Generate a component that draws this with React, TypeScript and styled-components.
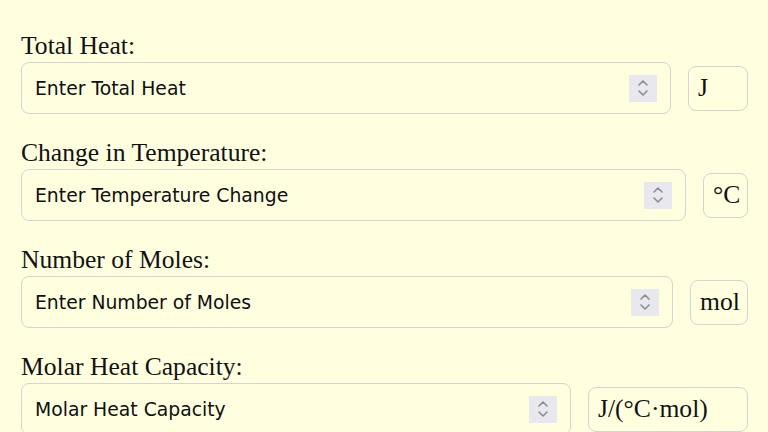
import React from 'react';
import styled, { createGlobalStyle } from 'styled-components';

const GlobalStyle = createGlobalStyle`
  html, body {
    margin: 0;
    padding: 0;
    background: #ffffe0;
  }
`;

export const Page = styled.div`
  min-height: 100vh;
  padding: 32px 20px 0 21px;
  box-sizing: border-box;
  background: #ffffe0;
  font-family: 'Liberation Serif', 'Times New Roman', serif;
`;

export const Group = styled.div`
  display: flex;
  flex-direction: column;
  margin-bottom: 25px;
`;

export const Label = styled.label`
  font-size: 25.6px;
  line-height: 28px;
  color: #111;
  margin-bottom: 2px;
`;

export const Row = styled.div`
  display: flex;
  align-items: center;
  gap: 17px;
`;

export const Field = styled.div`
  flex: 1;
  display: flex;
  align-items: center;
  height: 52px;
  box-sizing: border-box;
  border: 1px solid #d4d4d4;
  border-radius: 8px;
  padding: 0 13px 0 13px;
`;

export const Input = styled.input`
  flex: 1;
  min-width: 0;
  border: none;
  outline: none;
  background: transparent;
  padding: 0;
  font-family: 'DejaVu Sans', Verdana, sans-serif;
  font-size: 18.8px;
  color: #111;

  &::placeholder {
    color: #0f0f0f;
    opacity: 1;
  }
`;

export const Spinner = styled.div`
  width: 28px;
  height: 27px;
  background: #e8e8ee;
  display: flex;
  align-items: center;
  justify-content: center;
`;

export const Unit = styled.div<{ $width: number }>`
  box-sizing: border-box;
  height: 45px;
  width: ${(p) => p.$width}px;
  padding: 0 0 0 9px;
  border: 1px solid #d4d4d4;
  border-radius: 8px;
  display: flex;
  align-items: center;
  font-size: 25.6px;
  color: #111;
  white-space: nowrap;
`;

const SpinIcon = () => (
  <svg width="14" height="22" viewBox="0 0 14 22" fill="none" stroke="#8c8c94" strokeWidth="1.6" strokeLinecap="round" strokeLinejoin="round">
    <path d="M3 8 L7 4 L11 8" />
    <path d="M3 14 L7 18 L11 14" />
  </svg>
);

const fields = [
  { label: 'Total Heat:', placeholder: 'Enter Total Heat', unit: 'J', width: 60 },
  { label: 'Change in Temperature:', placeholder: 'Enter Temperature Change', unit: '°C', width: 45 },
  { label: 'Number of Moles:', placeholder: 'Enter Number of Moles', unit: 'mol', width: 58 },
  { label: 'Molar Heat Capacity:', placeholder: 'Molar Heat Capacity', unit: 'J/(°C·mol)', width: 160 },
];

export default function App() {
  return (
    <>
      <GlobalStyle />
      <Page>
        {fields.map((f) => (
          <Group key={f.label}>
            <Label>{f.label}</Label>
            <Row>
              <Field>
                <Input type="text" placeholder={f.placeholder} />
                <Spinner>
                  <SpinIcon />
                </Spinner>
              </Field>
              <Unit $width={f.width}>{f.unit}</Unit>
            </Row>
          </Group>
        ))}
      </Page>
    </>
  );
}
